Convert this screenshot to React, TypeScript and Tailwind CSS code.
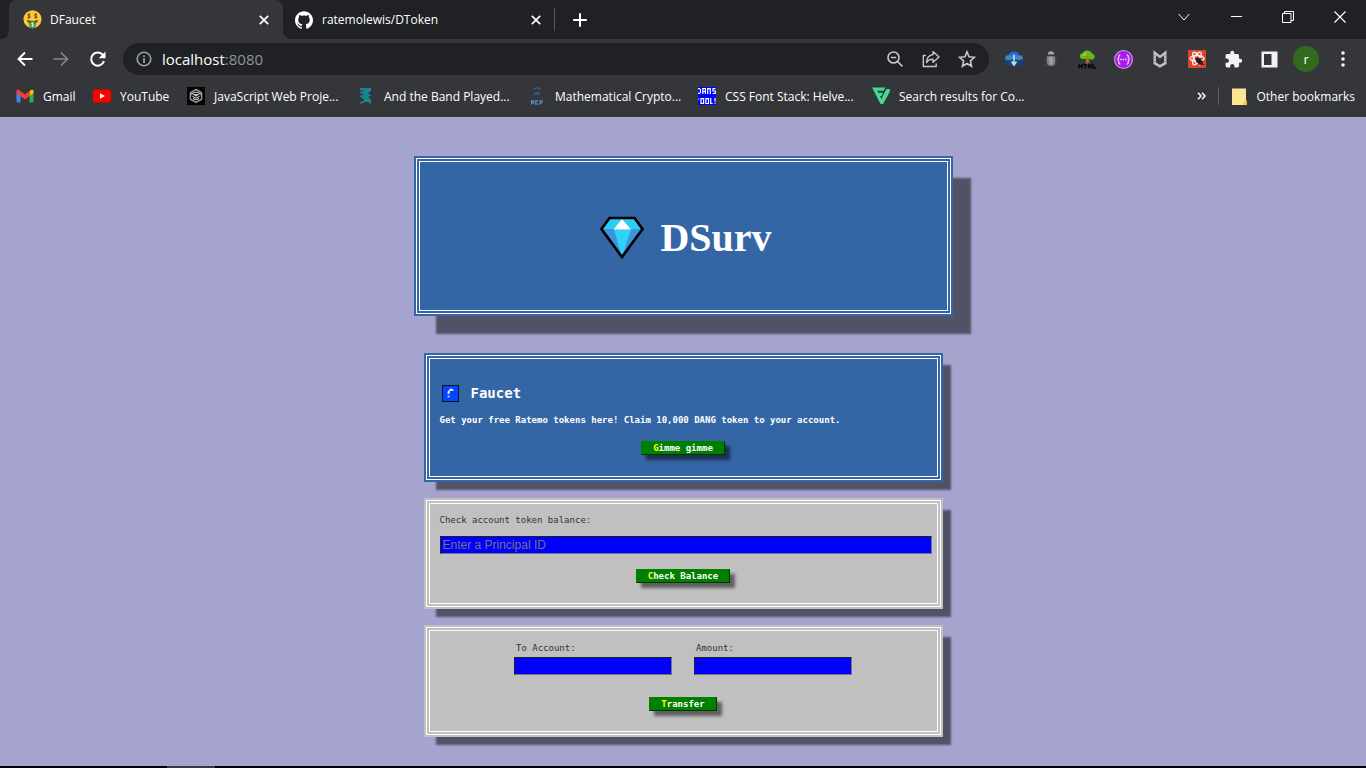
import React from "react";
import type { ReactNode } from "react";
import { SiGithub } from "react-icons/si";
import { MdExtension } from "react-icons/md";

const line = { fill: "none", stroke: "currentColor" } as const;

function FaceIcon() {
  return (
    <svg width="19" height="19" viewBox="0 0 19 19" aria-hidden="true">
      <circle cx="9.5" cy="9.2" r="9" fill="#fcc63c" />
      <path d="M4 9.8q5.500 2.400 11 0q-.6 4.200-5.500 4.400q-4.900-.2-5.500-4.400z" fill="#5c3b12" />
      <path d="M6.300 11.600h6.400v5.200q-3.200 3-6.400 0z" fill="#3f9a58" />
      <path d="M10.700 13.100q-2.400-.9-2.200.5q.2.800 1.200.9q1.300.3 1 1.200q-.6.900-2.300.1M9.500 12.200v5" stroke="#d8f5df" strokeWidth=".8" fill="none" />
      <path d="M7.200 4.500q-2.600-.9-2.300.6q.2.800 1.200.9q1.400.4 1 1.300q-.6.900-2.500.1M6 3.200v5.600M14 4.500q-2.600-.9-2.300.6q.2.800 1.200.9q1.400.4 1 1.300q-.6.900-2.500.1M12.800 3.200v5.600" stroke="#5c4415" strokeWidth=".9" fill="none" />
    </svg>
  );
}

function CloseIcon() {
  return (
    <svg width="10" height="10" viewBox="0 0 10 10" aria-hidden="true">
      <path d="M.8.8l8.400 8.400M9.200.8L.8 9.200" {...line} strokeWidth="1.700" />
    </svg>
  );
}

function TabCurve({ flip = false }: { flip?: boolean }) {
  return (
    <svg
      width="8"
      height="8"
      viewBox="0 0 8 8"
      aria-hidden="true"
      className={flip ? "absolute bottom-0 left-full" : "absolute right-full bottom-0"}
    >
      <path d={flip ? "M0 0a8 8 0 0 0 8 8H0z" : "M8 0a8 8 0 0 1-8 8h8z"} fill="#35363a" />
    </svg>
  );
}

function TabStrip() {
  return (
    <div className="flex h-[39px] items-stretch bg-[#202124] pl-[9px] text-white">
      <div className="relative flex w-[274px] items-center rounded-t-lg bg-[#35363a] pr-[14px] pl-[14px]">
        <TabCurve />
        <TabCurve flip />
        <FaceIcon />
        <span className="ml-[8px] flex-1 text-[12px]">DFaucet</span>
        <button aria-label="Close DFaucet"><CloseIcon /></button>
      </div>
      <div className="flex w-[271px] items-center pr-[13px] pl-[12px]">
        <SiGithub size={18} />
        <span className="ml-[9px] flex-1 text-[12px]">ratemolewis/DToken</span>
        <button aria-label="Close ratemolewis/DToken"><CloseIcon /></button>
      </div>
      <div className="my-[8px] w-px bg-[#55575b]" />
      <button aria-label="New tab" className="ml-[17px] flex items-center">
        <svg width="16" height="16" viewBox="0 0 16 16" aria-hidden="true">
          <path d="M8 1.200v13.600M1.200 8h13.600" {...line} strokeWidth="2" />
        </svg>
      </button>
      <div className="mb-[6px] ml-auto flex">
        <button aria-label="Search tabs" className="flex w-[52px] items-center justify-center">
          <svg width="12" height="8" viewBox="0 0 12 8" aria-hidden="true"><path d="M.7 1l5.300 6 5.300-6" {...line} /></svg>
        </button>
        <button aria-label="Minimize" className="flex w-[52px] items-center justify-center">
          <svg width="11" height="11" viewBox="0 0 11 11" aria-hidden="true"><path d="M0 5.500h11" {...line} /></svg>
        </button>
        <button aria-label="Restore" className="flex w-[52px] items-center justify-center">
          <svg width="12" height="12" viewBox="0 0 12 12" aria-hidden="true"><path d="M.5 2.500h8.500v9H.5zM2.500 2.500v-2h9v9H9" {...line} /></svg>
        </button>
        <button aria-label="Close window" className="flex w-[52px] items-center justify-center">
          <svg width="12" height="12" viewBox="0 0 12 12" aria-hidden="true"><path d="M.5.5l11 11M11.500.5l-11 11" {...line} strokeWidth="1.200" /></svg>
        </button>
      </div>
    </div>
  );
}

function Tool({ label, children }: { label: string; children: ReactNode }) {
  return (
    <button aria-label={label} className="flex h-[32px] w-[36px] items-center justify-center">
      {children}
    </button>
  );
}

function Ext({ label, children }: { label: string; children: ReactNode }) {
  return (
    <button aria-label={label} className="flex h-[32px] flex-1 items-center justify-center">
      {children}
    </button>
  );
}

function Toolbar() {
  return (
    <div className="flex items-center pt-[4px] pr-[5px] pl-[7px]">
      <div className="flex text-white">
        <Tool label="Back">
          <svg width="18" height="18" viewBox="0 0 18 18" aria-hidden="true"><path d="M16.500 9H3M9 2.500L2.500 9 9 15.500" {...line} strokeWidth="1.900" /></svg>
        </Tool>
        <Tool label="Forward">
          <svg width="18" height="18" viewBox="0 0 18 18" className="text-[#85868a]" aria-hidden="true"><path d="M1.500 9H15M9 2.500L15.500 9 9 15.500" {...line} strokeWidth="1.700" /></svg>
        </Tool>
        <Tool label="Reload">
          <svg width="18" height="18" viewBox="0 0 18 18" aria-hidden="true">
            <path d="M16 11.200A6.600 6.600 0 1 1 14.500 4.400L16 6" {...line} strokeWidth="2" />
            <path d="M17.500 1.500v6.800h-6.800z" fill="currentColor" />
          </svg>
        </Tool>
      </div>
      <div className="ml-[8px] flex h-[32px] flex-1 items-center rounded-full bg-[#202124] pr-[4px] pl-[12px] text-[#c4c7cb]">
        <svg width="18" height="18" viewBox="0 0 18 18" className="text-[#9aa0a6]" aria-hidden="true">
          <circle cx="9" cy="9" r="6.800" {...line} strokeWidth="1.600" />
          <path d="M9 8v5M9 5.200v1.700" {...line} strokeWidth="1.700" />
        </svg>
        <p className="ml-[9px] flex-1 text-[15px] text-[#8f9499]">
          <span className="text-white">localhost</span>:8080
        </p>
        <Tool label="Zoom">
          <svg width="18" height="18" viewBox="0 0 18 18" aria-hidden="true">
            <circle cx="7.500" cy="7.500" r="5.500" {...line} strokeWidth="1.600" />
            <path d="M11.500 11.500l5 5M4.800 7.500h5.400" {...line} strokeWidth="1.700" />
          </svg>
        </Tool>
        <Tool label="Share">
          <svg width="18" height="18" viewBox="0 0 18 18" aria-hidden="true">
            <path d="M4 5.500H1.300v11h12.900v-3M11 1.600l6 5.300-6 5.300V9.300c-3 0-5.200.8-6.500 3.300.2-4.800 2.800-7.600 6.500-8z" {...line} strokeWidth="1.400" strokeLinejoin="round" />
          </svg>
        </Tool>
        <Tool label="Bookmark this page">
          <svg width="18" height="18" viewBox="0 0 18 18" aria-hidden="true">
            <path d="M9 1.900l2.100 4.900 5.400.5-4.100 3.600 1.200 5.400L9 13.500l-4.600 2.800 1.200-5.400-4.100-3.600 5.400-.5z" {...line} strokeWidth="1.600" />
          </svg>
        </Tool>
      </div>
      <div className="ml-[7px] flex w-[365px] text-[#e8eaed]">
        <Ext label="Download helper">
          <svg width="18" height="18" viewBox="0 0 18 18" aria-hidden="true">
            <path d="M3.500 6a5.500 4.500 0 0 1 11 0z" fill="#2466e2" />
            <path d="M1 6h16l1 3v6.500H0V9z" fill="#15437a" />
            <path d="M.8 5.500h16.400L18 9.300l-5 .8-4-1-5 1.200-4-1z" fill="#4288bd" />
            <path d="M9 4.500v9M6.500 11.500l2.500 3.500 2.500-3.500" fill="none" stroke="#b8dcf0" strokeWidth="1.600" />
          </svg>
        </Ext>
        <Ext label="Debugger">
          <svg width="16" height="18" viewBox="0 0 16 18" aria-hidden="true">
            <path d="M4.800 4.500a3.200 3.200 0 0 1 6.400 0z" fill="#a1a2a2" />
            <path d="M1.500 5l2 2M14.500 5l-2 2M1 11h2.500m11.500 0h-2.500M1.500 16l2-2m11 2l-2-2" stroke="#48494c" />
            <path d="M3.800 6.500q4.200-1.200 8.400 0v5q0 4.500-4.200 4.500t-4.200-4.500z" fill="#858585" />
            <path d="M6 7h3.500v7H7z" fill="#b2b2b2" opacity=".6" />
          </svg>
        </Ext>
        <Ext label="HTML tree">
          <svg width="18" height="19" viewBox="0 0 18 19" aria-hidden="true">
            <path d="M8 7h2.500l1 7.500h-4z" fill="#a86f2d" />
            <path d="M1.700 6.500Q1.500 4 4.300 3.300Q6 .2 9 .4q3.500-.1 5 3 3 1 2.600 4-.8 2.600-4 2.200Q9 8.200 6 9.300 2 9.300 1.700 6.500z" fill="#63bd16" />
            <path d="M4 6q1-3.500 4.500-4.300L8 6z" fill="#7dd820" />
            <path d="M9.300 5v9M9.300 9l2.500-2.500M9.300 8L7 6" stroke="#ab7a35" fill="none" />
            <path d="M1 14v4.500M4.200 14v4.500M1 16.200h3.200M5.500 14.500h3.600M7.300 14.500v4M10.500 18.500v-4l1.500 2 1.500-2v4M15.500 14v4H18" stroke="#090909" strokeWidth="1.500" fill="none" />
          </svg>
        </Ext>
        <Ext label="JSON viewer">
          <svg width="19" height="19" viewBox="0 0 18 18" aria-hidden="true">
            <circle cx="9" cy="9" r="8.500" fill="#a51ee8" stroke="#d893f3" />
            <path d="M6 4.700q-1.800 0-1.500 2.400.2 1.500-1.500 1.900 1.700.4 1.500 1.900-.3 2.400 1.500 2.400M12 4.700q1.800 0 1.500 2.400-.2 1.500 1.500 1.900-1.700.4-1.500 1.900.3 2.400-1.500 2.400" fill="none" stroke="#f1d4fb" strokeWidth="1.200" />
            <path d="M5.800 9h1.500M8.200 9h1.500M10.600 9h1.500" stroke="#f1d4fb" strokeWidth="1.600" />
          </svg>
        </Ext>
        <Ext label="Web protection">
          <svg width="16" height="20" viewBox="0 0 16 20" aria-hidden="true">
            <path d="M2.700 3.800L8 7.900l5.300-4.100v10.400L8 17.300l-5.300-3.100z" fill="none" stroke="#bfc1c2" strokeWidth="2.500" />
            <path d="M1.200 6.500h1.500M1.200 9.500h1.500M1.200 12.500h1.500M13.300 6.500h1.500M13.300 9.500h1.500M13.300 12.500h1.500" stroke="#6b6d70" strokeWidth=".8" />
          </svg>
        </Ext>
        <Ext label="React tools">
          <svg width="18" height="18" viewBox="0 0 18 18" aria-hidden="true">
            <rect width="18" height="18" fill="#dc4431" />
            <g fill="none" stroke="#fce5df" strokeWidth="1.500">
              <ellipse cx="9" cy="8.500" rx="7" ry="3" />
              <ellipse cx="9" cy="8.500" rx="7" ry="3" transform="rotate(60 9 8.500)" />
              <ellipse cx="9" cy="8.500" rx="7" ry="3" transform="rotate(120 9 8.500)" />
            </g>
            <ellipse cx="11.300" cy="11.300" rx="2.500" ry="4.300" transform="rotate(-42 11.300 11.300)" fill="#291c1c" />
            <path d="M8 12l5-4M9.500 15l5-3.500M7 8l2 1m4 4l3 2" stroke="#291c1c" />
          </svg>
        </Ext>
        <Ext label="Extensions"><MdExtension size={19} color="#f1f3f4" /></Ext>
        <Ext label="Side panel">
          <svg width="17" height="17" viewBox="0 0 17 17" aria-hidden="true">
            <path d="M.5.500h16v16H.5zM3 3v11h7.500V3z" fill="#f1f3f4" fillRule="evenodd" />
          </svg>
        </Ext>
        <Ext label="Profile">
          <span className="flex size-[26px] items-center justify-center rounded-full bg-[#31691d] text-[13px] leading-none text-white">r</span>
        </Ext>
        <Ext label="Menu">
          <svg width="4" height="16" viewBox="0 0 4 16" fill="#f1f3f4" aria-hidden="true"><circle cx="2" cy="2" r="1.800" /><circle cx="2" cy="8" r="1.800" /><circle cx="2" cy="14" r="1.800" /></svg>
        </Ext>
      </div>
    </div>
  );
}

const bookmarks: { label: string; width: string; icon: ReactNode }[] = [
  {
    label: "Gmail",
    width: "w-[32px]",
    icon: (
      <>
        <path d="M.5 4.500l4 3v8H1.500q-1 0-1-1z" fill="#4285f4" />
        <path d="M17.500 4.500l-4 3v8h3q1 0 1-1z" fill="#34a853" />
        <path d="M13.500 4l1.500-1.100q2.500-1.200 2.500 1.600v1.700l-4 3z" fill="#fbbc04" />
        <path d="M.5 6.200V4.500Q.5 1.700 3 2.900l6 4.500 4.500-3.400v5.200L9 12.600 4.500 9.200z" fill="#ea4335" />
      </>
    ),
  },
  {
    label: "YouTube",
    width: "w-[49px]",
    icon: (
      <>
        <rect y="2.500" width="18" height="13" rx="3" fill="#f00" />
        <path d="M7 6.200v5.600L12 9z" fill="#fff" />
      </>
    ),
  },
  {
    label: "JavaScript Web Proje...",
    width: "w-[125px]",
    icon: (
      <>
        <rect width="18" height="18" fill="#050505" />
        <path d="M9 2.500l5.600 3.200v6.600L9 15.500l-5.600-3.200V5.700z" fill="none" stroke="#999" strokeWidth="1.500" />
        <path d="M4 7.500Q9 3 14 7.500M5.500 9Q9 13 12.500 9M6 11.500q3 2.500 6 0M7 7.500h4L9 9z" fill="none" stroke="#c8c8c8" strokeWidth="1.100" />
      </>
    ),
  },
  {
    label: "And the Band Played...",
    width: "w-[126px]",
    icon: (
      <path d="M3 1h11v3l-3 2.500L14 8v1l-3 .5 3 3.500v4l-4.500-2.500L3 17v-1.500L7.500 13 3 9.500V8.500L7 8 3 5.500V4.500l5-.5L3 3z" fill="#168692" />
    ),
  },
  {
    label: "Mathematical Crypto...",
    width: "w-[125px]",
    icon: (
      <g fill="none" stroke="#366180" strokeWidth="1.300">
        <path d="M6 3q0-2.200 3-2.200T12 3M6 5.500l1.500 2L9 5.500l1.500 2 1.500-2" />
        <path d="M6 9.500q3 2 6 0v2.500q-3 1.500-6 0z" stroke="#263b50" />
        <path d="M3.500 17.500v-3.500h2v2h-2M10 14H7.500v3H10M12 17.500v-3.500h3M12 15.800h2.500" stroke="#5789ad" />
      </g>
    ),
  },
  {
    label: "CSS Font Stack: Helve...",
    width: "w-[129px]",
    icon: (
      <>
        <rect width="18" height="18" fill="#00f" />
        <path d="M0 1.700h1.500l1 1v2.600l-1 1H0M4.800 7V1.700h2.600V7M4.800 4.500h2.600M9.700 7V1.700h2.600V7M17.500 1.700h-2.500v2.300h2.300v2.500h-2.500M.5 11.500v1M3 11.700h2.600v4.800H3zM7.900 11.700h2.600v4.800H7.900zM12.700 11v5.500h2M17 11v3.500M17 15.500v1.300" fill="none" stroke="#fff" strokeWidth="1.200" />
      </>
    ),
  },
  {
    label: "Search results for Co...",
    width: "w-[126px]",
    icon: (
      <path d="M0 .5h13.500l-2 3.300H5.300l1 2h5l-1.800 3.100H8l1.300 3L14.500 2H18l-.5 3.500L11 17H8.500z" fill="#41d995" />
    ),
  },
];

function BookmarkBar() {
  return (
    <nav aria-label="Bookmarks" className="flex h-[42px] items-center pr-[11px] pl-[16px] text-[12px] whitespace-nowrap text-white">
      <div className="flex flex-1 items-center gap-[18px]">
        {bookmarks.map((b) => (
          <a key={b.label} href="#" className="flex items-center gap-[9px]">
            <svg width="18" height="18" viewBox="0 0 18 18" aria-hidden="true">{b.icon}</svg>
            <span className={`${b.width} pt-[2px]`}>{b.label}</span>
          </a>
        ))}
      </div>
      <button aria-label="More bookmarks" className="flex">
        <svg width="9" height="8" viewBox="0 0 9 8" aria-hidden="true"><path d="M1 .7L4 4 1 7.300M5 .7L8 4 5 7.300" {...line} strokeWidth="1.500" /></svg>
      </button>
      <div className="ml-[12px] h-[18px] w-px bg-[#606267]" />
      <a href="#" className="ml-[13px] flex items-center gap-[9px]">
        <svg width="15" height="17" viewBox="0 0 15 17" aria-hidden="true">
          <path d="M0 .5h14v12l1 .5v4H0z" fill="#ffe591" />
          <path d="M11.500 17v-3.500l1.500-1 2 .5v4z" fill="#f1c754" />
        </svg>
        <span className="pt-[2px]">Other bookmarks</span>
      </a>
    </nav>
  );
}

function ActionButton({ children }: { children: string }) {
  return (
    <button className="block h-[14px] border border-t-[#008000] border-r-[#003300] border-b-[#003300] border-l-[#008000] bg-[#008000] px-[11px] text-[9px] leading-[12px] font-bold text-white shadow-[5px_5px_3px_rgba(0,0,0,0.5)] first-letter:text-[#ffff00]">
      {children}
    </button>
  );
}

const card = "mx-[10px] flex flex-col border-4 border-double border-white px-[10px]";
const blueCard = "bg-[#3465a4] shadow-[0_0_0_2px_#3465a4,10px_10px_2px_rgba(0,0,0,0.5)]";
const grayCard = "bg-[#c0c0c0] shadow-[0_0_0_2px_#c0c0c0,10px_10px_2px_rgba(0,0,0,0.5)]";
const field =
  "block h-[18px] rounded-none border border-t-[#222222] border-r-[#767676] border-b-[#767676] border-l-[#222222] bg-[#0000ff] px-[2px] font-['Liberation_Sans',Arial,sans-serif] text-[12px] leading-[16px] text-white outline-none placeholder:text-[#757575]";

export default function App() {
  return (
    <div className="flex min-h-screen flex-col bg-[#a5a4cf]">
      <header className="bg-[#35363a] font-['Open_Sans','Noto_Sans',sans-serif]">
        <TabStrip />
        <Toolbar />
        <BookmarkBar />
      </header>
      <main className="mx-auto w-full max-w-[535px] flex-1 pt-[41px] pb-[31px] font-['DejaVu_Sans_Mono',monospace] text-[9px] leading-[14px]">
        <div className="flex items-center justify-center gap-[16px] border-4 border-double border-white bg-[#3465a4] pt-[54px] pb-[50px] pl-[6px] shadow-[0_0_0_2px_#3465a4,20px_20px_2px_rgba(0,0,0,0.5)]">
          <svg width="44" height="44" viewBox="0 0 44 44" aria-hidden="true">
            <path d="M9 1.500h26L43 13 22 42.500 1 13z" fill="#3b95dc" />
            <path d="M10 3h24l7 10H3z" fill="#2bcdf5" />
            <path d="M14 13.500h17L22 41z" fill="#2fd2f8" />
            <path d="M22 3l9 10.500H13.500z" fill="#fff" />
            <path d="M9.500 2h25L42.500 13 22 41 1.500 13z" fill="none" stroke="#000" strokeWidth="2.600" />
          </svg>
          <h1 className="font-['Liberation_Serif',serif] text-[40px] leading-[44px] font-bold text-white">DSurv</h1>
        </div>

        <section className={`${card} ${blueCard} mt-[41px] pt-[22px] pb-[21px] font-bold text-white`}>
          <h2 className="flex h-[24px] items-center gap-[12px] pl-[2px] text-[14px]">
            <svg width="17" height="17" viewBox="0 0 17 17" aria-hidden="true">
              <rect x=".5" y=".5" width="16" height="16" fill="#0545ff" stroke="#071326" />
              <path d="M6.500 8.500V6.800L8 5h3.500M9 3.500v2M5.500 8h2.300" fill="none" stroke="#fff" strokeWidth="1.300" />
              <path d="M5.700 10.500h1.800v2H5.700z" fill="#9fe6ff" />
            </svg>
            Faucet
          </h2>
          <p className="mt-[8px]">Get your free Ratemo tokens here! Claim 10,000 DANG token to your account.</p>
          <div className="mt-[14px] flex justify-center">
            <ActionButton>Gimme gimme</ActionButton>
          </div>
        </section>

        <section className={`${card} ${grayCard} mt-[20px] pt-[9px] pb-[20px] text-[#333333]`}>
          <label htmlFor="principal">Check account token balance:</label>
          <input id="principal" placeholder="Enter a Principal ID" className={`${field} mt-[9px] -mr-[5px]`} />
          <div className="mt-[15px] flex justify-center">
            <ActionButton>Check Balance</ActionButton>
          </div>
        </section>

        <section className={`${card} ${grayCard} mt-[20px] pt-[10px] pb-[20px] text-[#333333]`}>
          <div className="flex justify-center gap-[22px]">
            <div>
              <label htmlFor="to-account" className="block pl-[2px]">To Account:</label>
              <input id="to-account" className={`${field} mt-[2px] w-[158px]`} />
            </div>
            <div>
              <label htmlFor="amount" className="block pl-[2px]">Amount:</label>
              <input id="amount" className={`${field} mt-[2px] w-[158px]`} />
            </div>
          </div>
          <div className="mt-[22px] flex justify-center">
            <ActionButton>Transfer</ActionButton>
          </div>
        </section>
      </main>
      <footer className="flex h-[2px] bg-black pl-[167px]">
        <div className="w-[48px] bg-[#3a3a3c]" />
      </footer>
    </div>
  );
}
